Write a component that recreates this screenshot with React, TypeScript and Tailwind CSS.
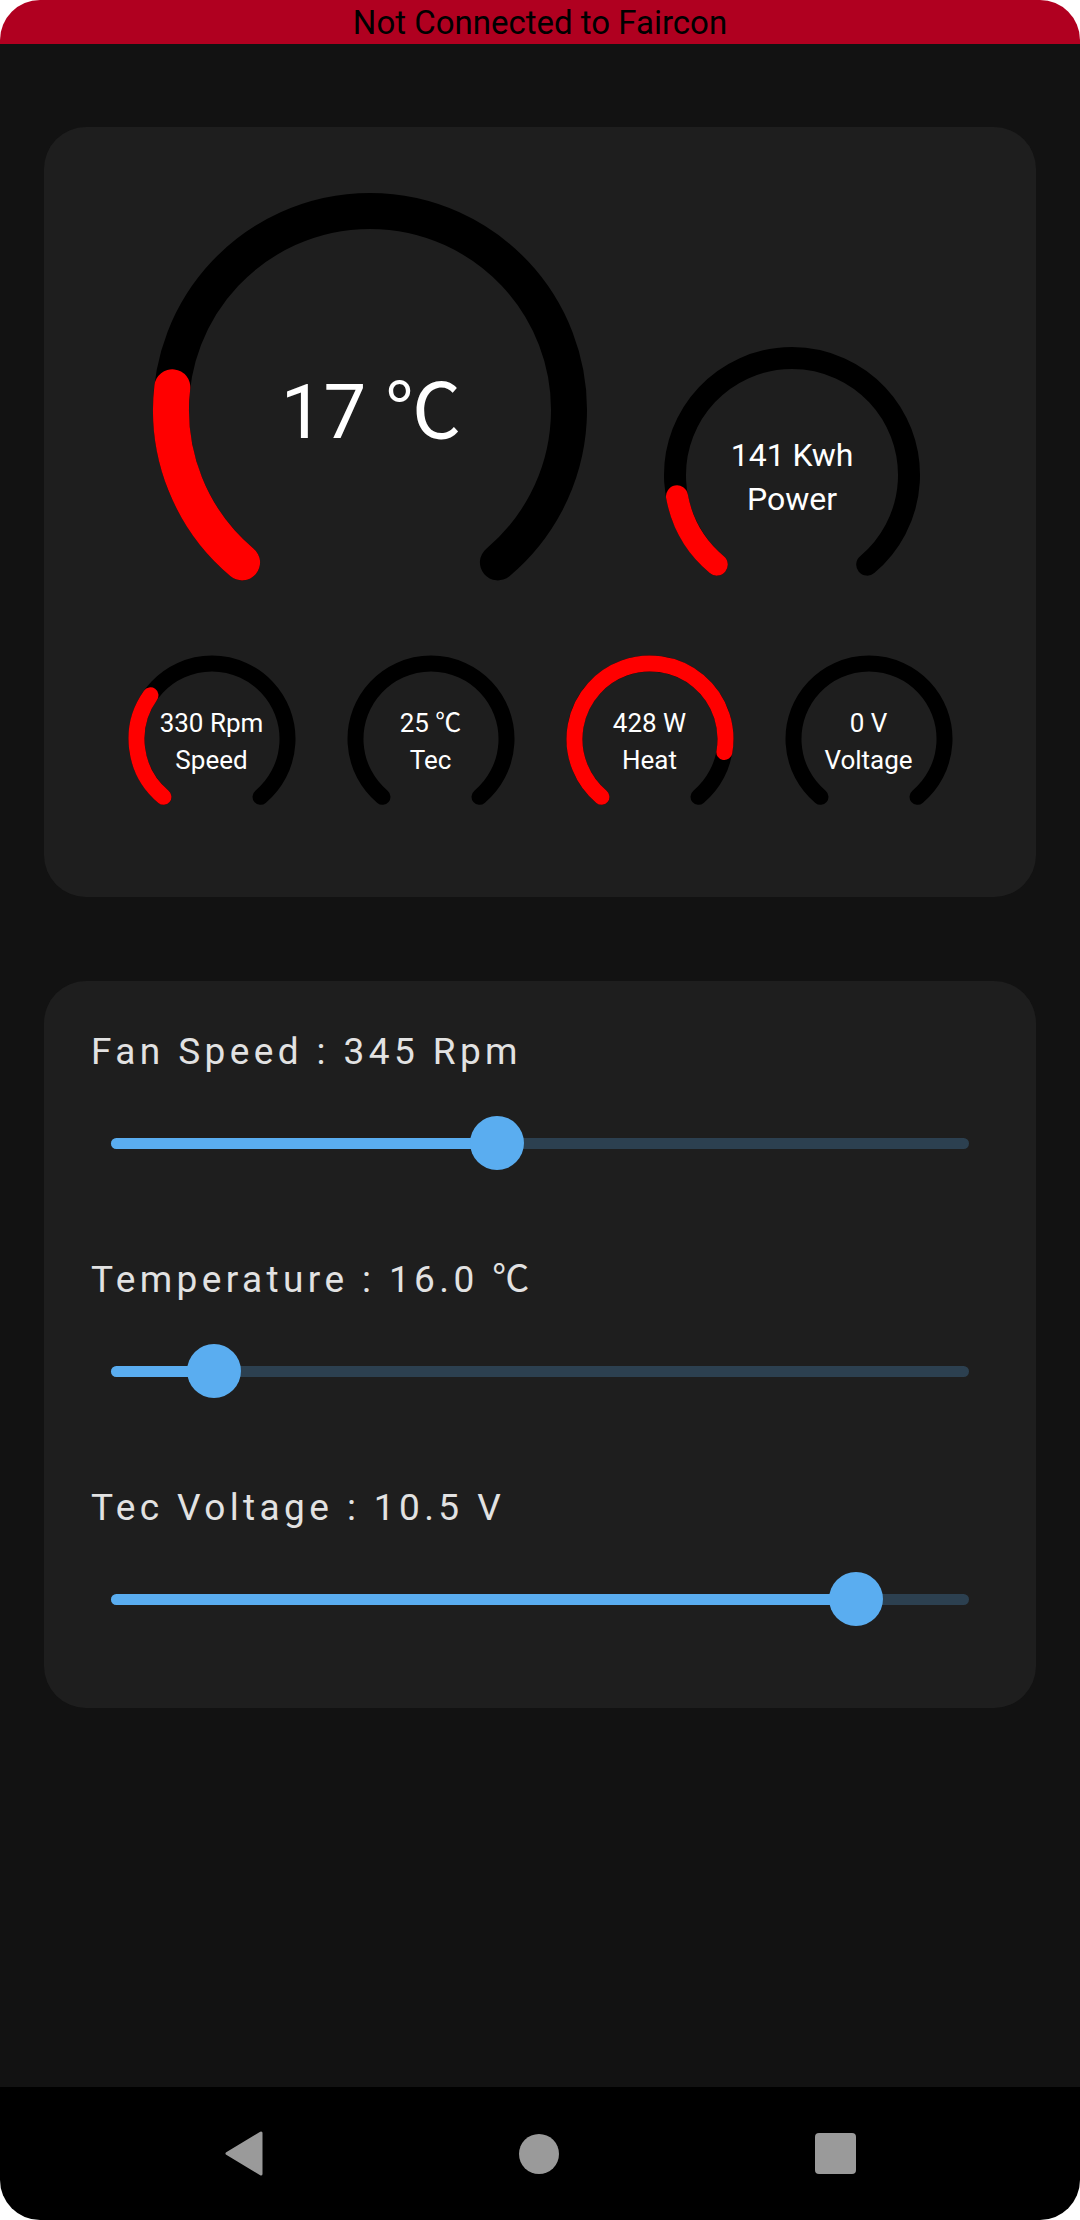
import React from 'react';

const FONT = { fontFamily: "Roboto, 'Noto Sans CJK SC', 'DejaVu Sans', sans-serif" };

// gauge arcs run clockwise from 130deg through 280deg of sweep
const START = 130;
const SWEEP = 280;

const pt = (c: number, r: number, deg: number) => {
  const a = (deg * Math.PI) / 180;
  return [c + r * Math.cos(a), c + r * Math.sin(a)];
};

const arc = (c: number, r: number, a0: number, a1: number) => {
  const [x0, y0] = pt(c, r, a0);
  const [x1, y1] = pt(c, r, a1);
  const large = a1 - a0 > 180 ? 1 : 0;
  return `M ${x0} ${y0} A ${r} ${r} 0 ${large} 1 ${x1} ${y1}`;
};

interface GaugeProps {
  size: number;
  r: number;
  stroke: number;
  value: number;
  className: string;
  children: React.ReactNode;
}

const Gauge = ({ size, r, stroke, value, className, children }: GaugeProps) => {
  const c = size / 2;
  return (
    <div className={`relative shrink-0 ${className}`}>
      <svg width={size} height={size} viewBox={`0 0 ${size} ${size}`}>
        <path d={arc(c, r, START, START + SWEEP)} fill="none" stroke="#000" strokeWidth={stroke} strokeLinecap="round" />
        {value > 0 && (
          <path d={arc(c, r, START, START + SWEEP * value)} fill="none" stroke="#ff0000" strokeWidth={stroke} strokeLinecap="round" />
        )}
      </svg>
      <div className="absolute inset-0 flex flex-col items-center justify-center text-white">
        {children}
      </div>
    </div>
  );
};

const SmallGauge = ({ value, top, bottom }: { value: number; top: string; bottom: string }) => (
  <Gauge size={170} r={75.5} stroke={16} value={value} className="w-[170px] h-[170px]">
    <span className="text-[26px] leading-[37px] pt-[5px]">{top}</span>
    <span className="text-[26px] leading-[37px]">{bottom}</span>
  </Gauge>
);

const Slider = ({ label, value }: { label: string; value: number }) => (
  <div className="flex flex-col">
    <div className="h-[48px] flex items-center pl-[3px] text-[37px] tracking-[4.4px] text-[#e2e2e2]">{label}</div>
    <div className="relative h-[54px] mx-[23px] mt-[40px] flex items-center">
      <div className="h-[11px] w-full rounded-full bg-[#2c4050]" />
      <div className="absolute left-0 h-[11px] rounded-full bg-[#5aadf0]" style={{ width: `${value * 100}%` }} />
      <div
        className="absolute top-0 w-[54px] h-[54px] rounded-full bg-[#5aadf0]"
        style={{ left: `calc(${value * 100}% - 27px)` }}
      />
    </div>
  </div>
);

export default function App() {
  return (
    <div className="w-[1080px] h-[2220px] bg-white" style={FONT}>
      <div className="h-full rounded-[40px] overflow-hidden flex flex-col">
        {/* Connection banner */}
        <div className="h-[44px] bg-[#b00020] text-black text-[33px] leading-[46px] text-center">
          Not Connected to Faircon
        </div>

        <div className="flex-1 bg-[#121212] px-[44px] pt-[83px] flex flex-col gap-[84px]">
          {/* Readings */}
          <div className="rounded-[42px] bg-[#1e1e1e] pt-[63px] pb-[73px]">
            <div className="flex">
              <Gauge size={440} r={199} stroke={36} value={0.202} className="w-[440px] h-[440px] ml-[106px]">
                <span className="text-[76px] leading-none pl-[2px] pt-[4px]">17 ℃</span>
              </Gauge>
              <Gauge size={260} r={117} stroke={22} value={0.141} className="w-[260px] h-[260px] ml-[72px] mt-[155px]">
                <span className="text-[32px] leading-[44px] pt-[4px]">141 Kwh</span>
                <span className="text-[32px] leading-[44px]">Power</span>
              </Gauge>
            </div>
            <div className="flex justify-center gap-[49px] mt-[24px]">
              <SmallGauge value={0.305} top="330 Rpm" bottom="Speed" />
              <SmallGauge value={0} top="25 ℃" bottom="Tec" />
              <SmallGauge value={0.857} top="428 W" bottom="Heat" />
              <SmallGauge value={0} top="0 V" bottom="Voltage" />
            </div>
          </div>

          {/* Controls */}
          <div className="rounded-[42px] bg-[#1e1e1e] px-[44px] pt-[47px] pb-[82px] flex flex-col gap-[86px]">
            <Slider label="Fan Speed : 345 Rpm" value={0.45} />
            <Slider label="Temperature : 16.0 ℃" value={0.12} />
            <Slider label="Tec Voltage : 10.5 V" value={0.868} />
          </div>
        </div>

        {/* Navigation bar */}
        <div className="h-[133px] bg-black flex items-center justify-center gap-[256px]">
          <svg width="38" height="45" viewBox="0 0 38 45">
            <polygon points="36,2 36,43 2,22.5" fill="#9a9a9a" stroke="#9a9a9a" strokeWidth="3" strokeLinejoin="round" />
          </svg>
          <div className="w-[40px] h-[40px] rounded-full bg-[#9a9a9a]" />
          <div className="w-[41px] h-[41px] rounded-[4px] bg-[#9a9a9a]" />
        </div>
      </div>
    </div>
  );
}
